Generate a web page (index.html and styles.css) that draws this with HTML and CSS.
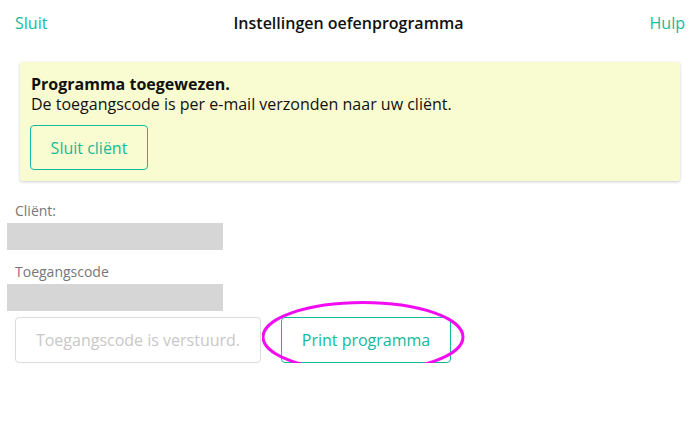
FILE: index.html
```html
<!DOCTYPE html>
<html lang="nl">
<head>
    <meta charset="UTF-8">
    <meta name="viewport" content="width=device-width, initial-scale=1.0">
    <title>Instellingen oefenprogramma</title>
    <link rel="stylesheet" href="styles.css">
</head>
<body>
    <!-- Kopbalk -->
    <div class="topbar">
        <a class="link" href="#">Sluit</a>
        <div class="title">Instellingen oefenprogramma</div>
        <a class="link" href="#">Hulp</a>
    </div>

    <!-- Melding -->
    <div class="alert">
        <div class="alert-title">Programma toegewezen.</div>
        <div class="alert-text">De toegangscode is per e-mail verzonden naar uw cliënt.</div>
        <button type="button" class="btn">Sluit cliënt</button>
    </div>

    <div class="details">
        <div class="field">
            <div class="label">Cliënt:</div>
            <div class="value"></div>
        </div>
        <div class="field">
            <div class="label">Toegangscode</div>
            <div class="value"></div>
        </div>

        <div class="actions">
            <button type="button" class="btn btn-disabled" disabled>Toegangscode is verstuurd.</button>
            <div class="highlight">
                <button type="button" class="btn btn-print">Print programma</button>
                <svg class="ring" width="206" height="74" viewBox="0 0 206 74">
                    <ellipse cx="101" cy="36" rx="100" ry="34.5" fill="none" stroke="#f20cf2" stroke-width="3"/>
                </svg>
            </div>
        </div>
    </div>
</body>
</html>
```

FILE: styles.css
```css
body {
    font-family: "Open Sans", "Noto Sans", sans-serif;
    font-size: 16px;
    color: #111;
    background-color: #fff;
    margin: 0;
}
.topbar {
    display: flex;
    justify-content: space-between;
    align-items: center;
    height: 45px;
    padding: 0 13px 0 15px;
}
.link {
    color: #14b99b;
    text-decoration: none;
}
.title {
    font-weight: 600;
}
.alert {
    background-color: #f8fcd0;
    margin: 17px 18px 0 20px;
    padding: 12px 11px 11px;
    border-radius: 2px;
    box-shadow: 0 1px 3px rgba(0, 0, 0, 0.2);
    line-height: 20px;
}
.alert-title {
    font-weight: 700;
}
.btn {
    font-family: inherit;
    font-size: 16px;
    background-color: transparent;
    color: #14b99b;
    border: 1px solid #14b99b;
    border-radius: 4px;
    height: 46px;
    padding: 0 10px;
    white-space: nowrap;
    cursor: pointer;
}
.alert .btn {
    margin-top: 11px;
    height: 45px;
    width: 118px;
    margin-left: -1px;
}
.details {
    display: flex;
    flex-direction: column;
    gap: 10px;
    padding: 20px 0 0;
}
.label {
    font-size: 14px;
    color: #777;
    margin-left: 15px;
    line-height: 20px;
}
.field + .field .label {
    margin-top: 2px;
}
.value {
    background-color: #d6d6d6;
    width: 216px;
    height: 27px;
    margin: 2px 0 0 7px;
}
.actions {
    display: flex;
    align-items: center;
    gap: 20px;
    margin: -4px 0 0 15px;
}
.btn-disabled {
    width: 246px;
    color: #c8c8c8;
    border-color: #dcdcdc;
    cursor: default;
}
.btn-print {
    width: 170px;
}
.highlight {
    position: relative;
}
.ring {
    position: absolute;
    left: -19px;
    top: -16px;
    pointer-events: none;
}
```
